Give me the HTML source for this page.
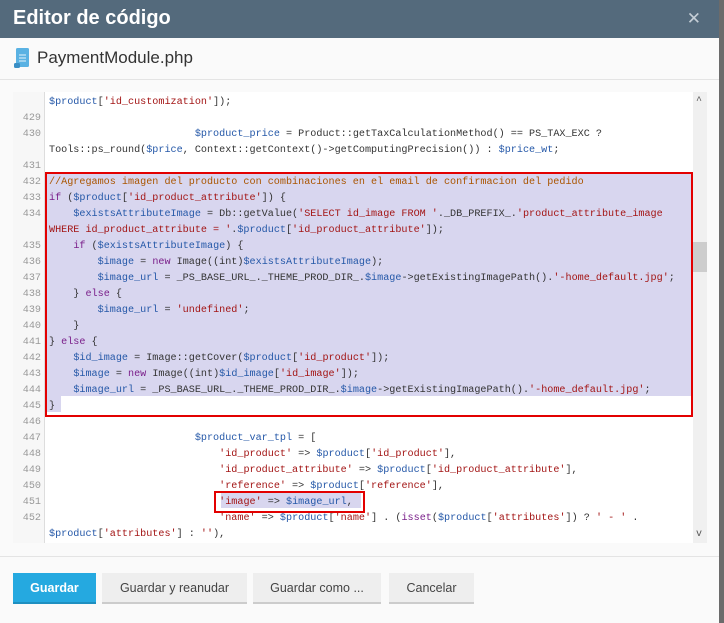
<!DOCTYPE html>
<html><head><meta charset="utf-8"><style>
*{margin:0;padding:0;box-sizing:border-box}
body{width:724px;height:623px;background:#6b6b6b;overflow:hidden;font-family:"Liberation Sans",sans-serif;position:relative}
.modal{position:absolute;left:0;top:0;width:719px;height:623px;background:#fafafa}
.hd{height:38px;background:#546a7c;color:#fff;font-size:20px;font-weight:bold;padding:7px 0 0 13px}
.x{position:absolute;right:18px;top:9px;color:#c5ced6;font-size:17px;font-weight:normal}
.sub{height:42px;border-bottom:1px solid #e4e4e4;position:relative}
.sub span{position:absolute;left:37px;top:10px;font-size:17px;color:#333}
.code{position:absolute;left:13px;top:92px;width:694px;height:451px;background:#fff;overflow:hidden;font-family:"Liberation Mono",monospace;font-size:10.15px;line-height:16px;color:#333}
.gut{position:absolute;left:0;top:0;width:32px;height:100%;background:#f7f7f7;border-right:1px solid #ddd}
.ln{position:absolute;left:0;width:28px;text-align:right;color:#999;margin-top:2px}
.l{position:absolute;left:36px;white-space:pre;margin-top:2px}
.sel{position:absolute;left:33px;top:80px;width:646px;height:224px;background:#d8d6ef}
.sel2{position:absolute;left:33px;top:304px;width:15px;height:16px;background:#d8d6ef}
.sel3{position:absolute;left:208px;top:400px;width:140px;height:16px;background:#d8d6ef}
.rb{position:absolute;border:2px solid #e30000}
.sb{position:absolute;left:680px;top:0;width:14px;height:451px;background:#f0f0f0}
.thumb{position:absolute;left:680px;top:150px;width:14px;height:30px;background:#cdcdcd}
.v{color:#2558a8}.s{color:#a31515}.c{color:#aa5500}.k{color:#7a1f8a}
.ft{position:absolute;left:0;top:556px;width:719px;border-top:1px solid #e4e4e4}
.btn{position:absolute;top:573px;height:31px;background:#eee;border-bottom:2px solid #ccc;font-size:12.5px;color:#444;text-align:center;line-height:30px}
</style></head><body>
<div class="modal">
<div class="hd">Editor de código<span class="x">✕</span></div>
<div class="sub">
<svg style="position:absolute;left:13px;top:9px" width="18" height="22" viewBox="0 0 18 22"><rect x="3" y="1" width="13" height="19" rx="1.5" fill="#5ab2e3"/><rect x="1" y="16" width="6" height="5" rx="1.5" fill="#3a8fc5"/><path d="M6 8h7M6 11h7M6 14h7" stroke="#e6f4fb" stroke-width="1"/></svg>
<span>PaymentModule.php</span></div>
<div class="code">
<div class="gut"></div>
<div class="sel"></div><div class="sel2"></div><div class="sel3"></div>
<div class="sb"></div><div class="thumb"></div>
<div style="position:absolute;left:683px;top:2px;color:#555;font-size:10px">^</div>
<div style="position:absolute;left:683px;top:435px;color:#555;font-size:10px">v</div>
<div class="l" style="top:1px"><span class="v">$product</span>[<span class="s">'id_customization'</span>]);</div>
<div class="ln" style="top:17px">429</div>
<div class="ln" style="top:33px">430</div><div class="l" style="top:33px">                        <span class="v">$product_price</span> = Product::getTaxCalculationMethod() == PS_TAX_EXC ?</div>
<div class="l" style="top:49px">Tools::ps_round(<span class="v">$price</span>, Context::getContext()-&gt;getComputingPrecision()) : <span class="v">$price_wt</span>;</div>
<div class="ln" style="top:65px">431</div>
<div class="ln" style="top:81px">432</div><div class="l" style="top:81px"><span class="c">//Agregamos imagen del producto con combinaciones en el email de confirmacion del pedido</span></div>
<div class="ln" style="top:97px">433</div><div class="l" style="top:97px"><span class="k">if</span> (<span class="v">$product</span>[<span class="s">'id_product_attribute'</span>]) {</div>
<div class="ln" style="top:113px">434</div><div class="l" style="top:113px">    <span class="v">$existsAttributeImage</span> = Db::getValue(<span class="s">'SELECT id_image FROM '</span>._DB_PREFIX_.<span class="s">'product_attribute_image</span></div>
<div class="l" style="top:129px"><span class="s">WHERE id_product_attribute = '</span>.<span class="v">$product</span>[<span class="s">'id_product_attribute'</span>]);</div>
<div class="ln" style="top:145px">435</div><div class="l" style="top:145px">    <span class="k">if</span> (<span class="v">$existsAttributeImage</span>) {</div>
<div class="ln" style="top:161px">436</div><div class="l" style="top:161px">        <span class="v">$image</span> = <span class="k">new</span> Image((int)<span class="v">$existsAttributeImage</span>);</div>
<div class="ln" style="top:177px">437</div><div class="l" style="top:177px">        <span class="v">$image_url</span> = _PS_BASE_URL_._THEME_PROD_DIR_.<span class="v">$image</span>-&gt;getExistingImagePath().<span class="s">'-home_default.jpg'</span>;</div>
<div class="ln" style="top:193px">438</div><div class="l" style="top:193px">    } <span class="k">else</span> {</div>
<div class="ln" style="top:209px">439</div><div class="l" style="top:209px">        <span class="v">$image_url</span> = <span class="s">'undefined'</span>;</div>
<div class="ln" style="top:225px">440</div><div class="l" style="top:225px">    }</div>
<div class="ln" style="top:241px">441</div><div class="l" style="top:241px">} <span class="k">else</span> {</div>
<div class="ln" style="top:257px">442</div><div class="l" style="top:257px">    <span class="v">$id_image</span> = Image::getCover(<span class="v">$product</span>[<span class="s">'id_product'</span>]);</div>
<div class="ln" style="top:273px">443</div><div class="l" style="top:273px">    <span class="v">$image</span> = <span class="k">new</span> Image((int)<span class="v">$id_image</span>[<span class="s">'id_image'</span>]);</div>
<div class="ln" style="top:289px">444</div><div class="l" style="top:289px">    <span class="v">$image_url</span> = _PS_BASE_URL_._THEME_PROD_DIR_.<span class="v">$image</span>-&gt;getExistingImagePath().<span class="s">'-home_default.jpg'</span>;</div>
<div class="ln" style="top:305px">445</div><div class="l" style="top:305px">}</div>
<div class="ln" style="top:321px">446</div>
<div class="ln" style="top:337px">447</div><div class="l" style="top:337px">                        <span class="v">$product_var_tpl</span> = [</div>
<div class="ln" style="top:353px">448</div><div class="l" style="top:353px">                            <span class="s">'id_product'</span> =&gt; <span class="v">$product</span>[<span class="s">'id_product'</span>],</div>
<div class="ln" style="top:369px">449</div><div class="l" style="top:369px">                            <span class="s">'id_product_attribute'</span> =&gt; <span class="v">$product</span>[<span class="s">'id_product_attribute'</span>],</div>
<div class="ln" style="top:385px">450</div><div class="l" style="top:385px">                            <span class="s">'reference'</span> =&gt; <span class="v">$product</span>[<span class="s">'reference'</span>],</div>
<div class="ln" style="top:401px">451</div><div class="l" style="top:401px">                            <span class="s">'image'</span> =&gt; <span class="v">$image_url</span>,</div>
<div class="ln" style="top:417px">452</div><div class="l" style="top:417px">                            <span class="s">'name'</span> =&gt; <span class="v">$product</span>[<span class="s">'name'</span>] . (<span class="k">isset</span>(<span class="v">$product</span>[<span class="s">'attributes'</span>]) ? <span class="s">' - '</span> .</div>
<div class="l" style="top:433px"><span class="v">$product</span>[<span class="s">'attributes'</span>] : <span class="s">''</span>),</div>
</div>
<div class="rb" style="left:45px;top:172px;width:648px;height:245px"></div>
<div class="rb" style="left:214px;top:491px;width:151px;height:22px"></div>
<div class="ft"></div>
<div class="btn" style="left:13px;width:83px;background:#25a9e0;border-bottom-color:#1e8fc0;color:#fff;font-weight:bold">Guardar</div>
<div class="btn" style="left:102px;width:145px">Guardar y reanudar</div>
<div class="btn" style="left:253px;width:128px">Guardar como ...</div>
<div class="btn" style="left:389px;width:85px">Cancelar</div>
</div>
</body></html>
